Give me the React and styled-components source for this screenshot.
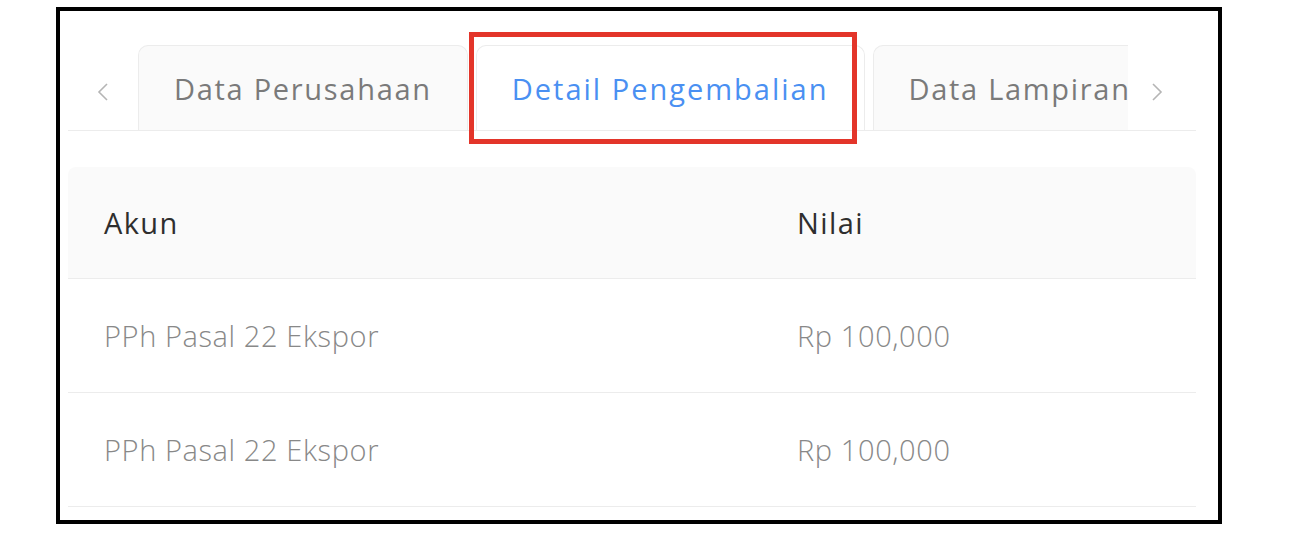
import React from 'react';
import styled, { createGlobalStyle } from 'styled-components';

const GlobalStyle = createGlobalStyle`
  html, body {
    margin: 0;
    background: #ffffff;
  }
  body {
    padding: 7px 0 0 56px;
    font-family: "Open Sans", "DejaVu Sans", sans-serif;
  }
`;

const Frame = styled.div`
  position: relative;
  box-sizing: border-box;
  width: 1166px;
  height: 517px;
  border: 4px solid #000000;
  padding: 34px 22px 0 8px;
  overflow: hidden;
`;

const TabBar = styled.div`
  display: flex;
  height: 85px;
  border-bottom: 1px solid #ececec;
`;

const NavArrow = styled.div`
  flex: 0 0 ${(p) => p.width}px;
  display: flex;
  align-items: center;
  justify-content: ${(p) => (p.side === 'left' ? 'center' : 'flex-start')};
  padding: 8px 0 0 ${(p) => (p.side === 'left' ? 0 : 22)}px;
  box-sizing: border-box;
`;

const TabList = styled.div`
  flex: 1;
  display: flex;
  gap: 8px;
  overflow: hidden;
`;

const Tab = styled.div`
  flex: 0 0 auto;
  box-sizing: border-box;
  height: ${(p) => (p.active ? 86 : 85)}px;
  padding: 0 35px;
  display: flex;
  align-items: center;
  border: 1px solid #ececec;
  border-bottom: ${(p) => (p.active ? '1px solid #ffffff' : 'none')};
  border-radius: 10px 10px 0 0;
  background: ${(p) => (p.active ? '#ffffff' : '#fafafa')};
  color: ${(p) => (p.active ? '#4a90f2' : '#7a7a7a')};
  font-size: 29px;
  font-weight: ${(p) => (p.active ? 500 : 400)};
  letter-spacing: ${(p) => (p.active ? 2 : 1.7)}px;
  white-space: nowrap;
`;

const Highlight = styled.div`
  position: absolute;
  left: 409px;
  top: 21px;
  width: 388px;
  height: 112px;
  box-sizing: border-box;
  border: 5px solid #e3352a;
  pointer-events: none;
`;

const Table = styled.div`
  margin-top: 36px;
`;

const Row = styled.div`
  display: grid;
  grid-template-columns: 693px 1fr;
  align-items: center;
  box-sizing: border-box;
  height: ${(p) => (p.head ? 112 : 114)}px;
  border-bottom: 1px solid #ececec;
  background: ${(p) => (p.head ? '#fafafa' : '#ffffff')};
  border-radius: ${(p) => (p.head ? '8px 8px 0 0' : '0')};
`;

const Cell = styled.div`
  padding-left: 36px;
  font-size: 29px;
  font-weight: ${(p) => (p.head ? 500 : 300)};
  letter-spacing: ${(p) => (p.head ? 1.4 : 0.6)}px;
  color: ${(p) => (p.head ? '#2e2e2e' : '#888888')};
  white-space: nowrap;
`;

const Chevron = ({ dir }) => (
  <svg width="14" height="20" viewBox="0 0 14 20">
    <polyline
      points={dir === 'left' ? '11,2 3,10 11,18' : '3,2 11,10 3,18'}
      fill="none"
      stroke="#b5b5b5"
      strokeWidth="1.6"
    />
  </svg>
);

const rows = [
  { akun: 'PPh Pasal 22 Ekspor', nilai: 'Rp 100,000' },
  { akun: 'PPh Pasal 22 Ekspor', nilai: 'Rp 100,000' },
];

export default function App() {
  return (
    <>
      <GlobalStyle />
      <Frame>
        <TabBar>
          <NavArrow side="left" width={70}>
            <Chevron dir="left" />
          </NavArrow>
          <TabList>
            <Tab>Data Perusahaan</Tab>
            <Tab active>Detail Pengembalian</Tab>
            <Tab>Data Lampiran</Tab>
          </TabList>
          <NavArrow side="right" width={68}>
            <Chevron dir="right" />
          </NavArrow>
        </TabBar>
        <Table>
          <Row head>
            <Cell head>Akun</Cell>
            <Cell head>Nilai</Cell>
          </Row>
          {rows.map((r, i) => (
            <Row key={i}>
              <Cell>{r.akun}</Cell>
              <Cell>{r.nilai}</Cell>
            </Row>
          ))}
        </Table>
        <Highlight />
      </Frame>
    </>
  );
}
